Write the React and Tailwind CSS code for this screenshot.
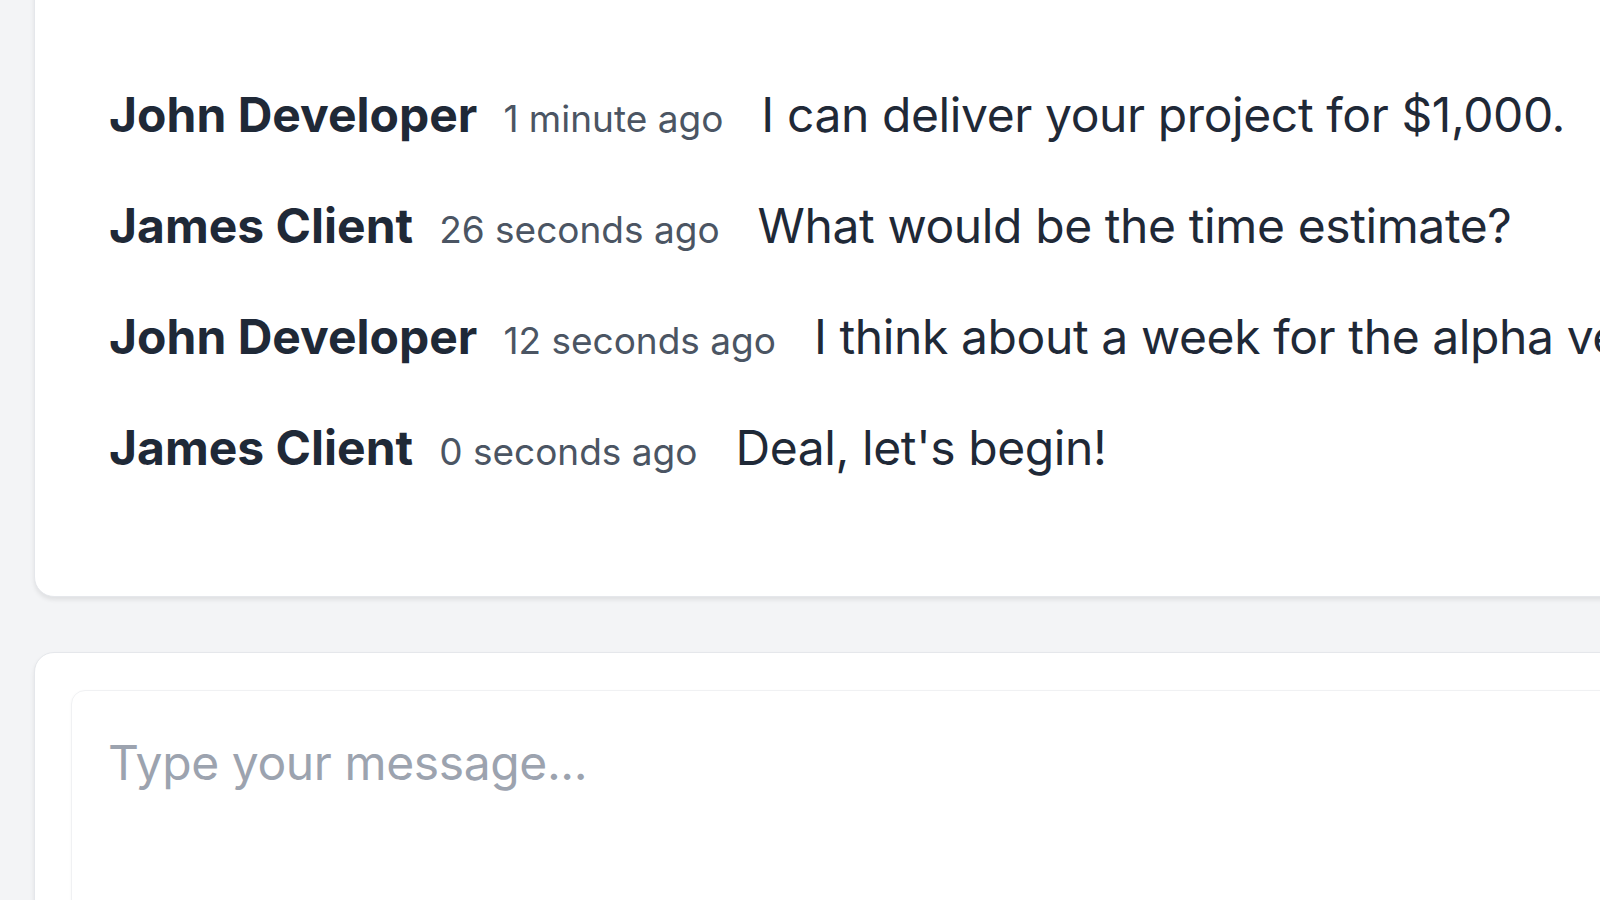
const messages = [
  { name: "John Developer", time: "1 minute ago", text: "I can deliver your project for $1,000." },
  { name: "James Client", time: "26 seconds ago", text: "What would be the time estimate?" },
  { name: "John Developer", time: "12 seconds ago", text: "I think about a week for the alpha version." },
  { name: "James Client", time: "0 seconds ago", text: "Deal, let's begin!" },
];

export default function App() {
  return (
    <div
      className="h-screen overflow-hidden bg-[#f3f4f6] pl-[34px] text-[#1f2937]"
      style={{ fontFamily: "Inter, 'Noto Sans', sans-serif" }}
    >
      <div className="-mt-[40px] w-[1700px] rounded-[20px] border border-[#e5e7eb] bg-white pt-[118px] pb-[108px] pl-[74px] shadow-[0_3px_4px_rgba(0,0,0,0.08)]">
        <div className="flex flex-col gap-[35px]">
          {messages.map((m, i) => (
            <div key={i} className="flex items-baseline whitespace-nowrap leading-[72px]">
              <span className="text-[48px] font-bold">{m.name}</span>
              <span className="ml-[26px] text-[37px] text-[#4b5563]">{m.time}</span>
              <span className="ml-[38px] text-[48px] tracking-[-0.4px]">{m.text}</span>
            </div>
          ))}
        </div>
      </div>

      <div className="mt-[55px] w-[1700px] rounded-[20px] border border-[#e5e7eb] bg-white px-[36px] pt-[37px] pb-[60px] shadow-[0_3px_4px_rgba(0,0,0,0.08)]">
        <div className="h-[300px] rounded-[14px] border border-[#f0f1f3] shadow-[0_1px_3px_rgba(0,0,0,0.04)]">
          <textarea
            placeholder="Type your message..."
            className="h-full w-full resize-none bg-transparent px-[36px] pt-[36px] text-[48px] leading-[72px] tracking-[-0.4px] outline-none placeholder:text-[#9ca3af]"
          />
        </div>
      </div>
    </div>
  );
}
